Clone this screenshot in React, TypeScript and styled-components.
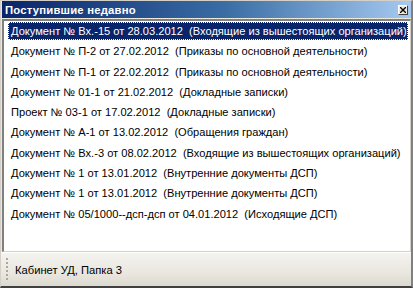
import styled, { createGlobalStyle } from "styled-components";

const GlobalStyle = createGlobalStyle`
  html, body {
    margin: 0;
    padding: 0;
    background: #d4d0c8;
  }
`;

const items: string[] = [
  "Документ № Вх.-15 от 28.03.2012  (Входящие из вышестоящих организаций)",
  "Документ № П-2 от 27.02.2012  (Приказы по основной деятельности)",
  "Документ № П-1 от 22.02.2012  (Приказы по основной деятельности)",
  "Документ № 01-1 от 21.02.2012  (Докладные записки)",
  "Проект № 03-1 от 17.02.2012  (Докладные записки)",
  "Документ № А-1 от 13.02.2012  (Обращения граждан)",
  "Документ № Вх.-3 от 08.02.2012  (Входящие из вышестоящих организаций)",
  "Документ № 1 от 13.01.2012  (Внутренние документы ДСП)",
  "Документ № 1 от 13.01.2012  (Внутренние документы ДСП)",
  "Документ № 05/1000--дсп-дсп от 04.01.2012  (Исходящие ДСП)",
];

const Window = styled.div`
  width: 413px;
  height: 288px;
  box-sizing: border-box;
  display: flex;
  flex-direction: column;
  background: #ece9d8;
  border-top: 1px solid #d4d0c8;
  border-left: 1px solid #d4d0c8;
  border-right: 2px solid #808080;
  border-bottom: 2px solid #404040;
  font-family: "Liberation Sans", Arial, sans-serif;
  overflow: hidden;
`;

const TitleBar = styled.div`
  height: 17px;
  margin: 0 0 0 1px;
  display: flex;
  align-items: center;
  justify-content: space-between;
  padding: 0 2px 0 3px;
  background: linear-gradient(to right, #0a246a 0%, #3a6ea5 55%, #a6caf0 100%);
`;

const Title = styled.span`
  color: #ffffff;
  font-weight: bold;
  font-size: 11.3px;
  letter-spacing: 0.2px;
`;

const CloseButton = styled.div`
  width: 10px;
  height: 10px;
  box-sizing: border-box;
  background: #ece9d8;
  border-top: 1px solid #ffffff;
  border-left: 1px solid #ffffff;
  border-right: 1px solid #404040;
  border-bottom: 1px solid #404040;
  display: flex;
  align-items: center;
  justify-content: center;
  margin-right: 1px;
`;

const ListFrame = styled.div`
  flex: 1;
  margin: 1px 0 0 1px;
  border-top: 2px solid #808080;
  border-left: 2px solid #808080;
  border-right: 1px solid #d4d0c8;
  border-bottom: 1px solid #d4d0c8;
  background: #ffffff;
  padding: 1px 0 0 4px;
  box-sizing: border-box;
`;

const Row = styled.div<{ $selected?: boolean }>`
  height: 18px;
  margin-bottom: 2.3px;
  margin-right: 2px;
  display: flex;
  align-items: center;
  padding-left: 3px;
  box-sizing: border-box;
  font-size: 11.1px;
  white-space: pre;
  color: ${({ $selected }) => ($selected ? "#ffffff" : "#000000")};
  background: ${({ $selected }) => ($selected ? "#0a246a" : "transparent")};
  outline: ${({ $selected }) => ($selected ? "1px dotted #ffffff" : "none")};
  outline-offset: -1px;
`;

const StatusBar = styled.div`
  height: 33px;
  display: flex;
  align-items: center;
  gap: 7px;
  padding-left: 5px;
  border-top: 1px solid #ffffff;
  background: linear-gradient(to bottom, #f4f3ef 0%, #e9e7df 60%, #dcd9cf 100%);
  font-size: 11.2px;
  color: #000000;
`;

const Grip = styled.div`
  width: 2px;
  height: 24px;
  background: repeating-linear-gradient(to bottom, #aca899 0 2px, transparent 2px 4px);
`;

export default function App() {
  return (
    <>
      <GlobalStyle />
      <Window>
        <TitleBar>
          <Title>Поступившие недавно</Title>
          <CloseButton>
            <svg width="6" height="6" viewBox="0 0 6 6">
              <path d="M0 0L6 6M6 0L0 6" stroke="#000" strokeWidth="1.3" />
            </svg>
          </CloseButton>
        </TitleBar>
        <ListFrame>
          {items.map((text, i) => (
            <Row key={i} $selected={i === 0}>
              {text}
            </Row>
          ))}
        </ListFrame>
        <StatusBar>
          <Grip />
          <span>Кабинет УД, Папка 3</span>
        </StatusBar>
      </Window>
    </>
  );
}
